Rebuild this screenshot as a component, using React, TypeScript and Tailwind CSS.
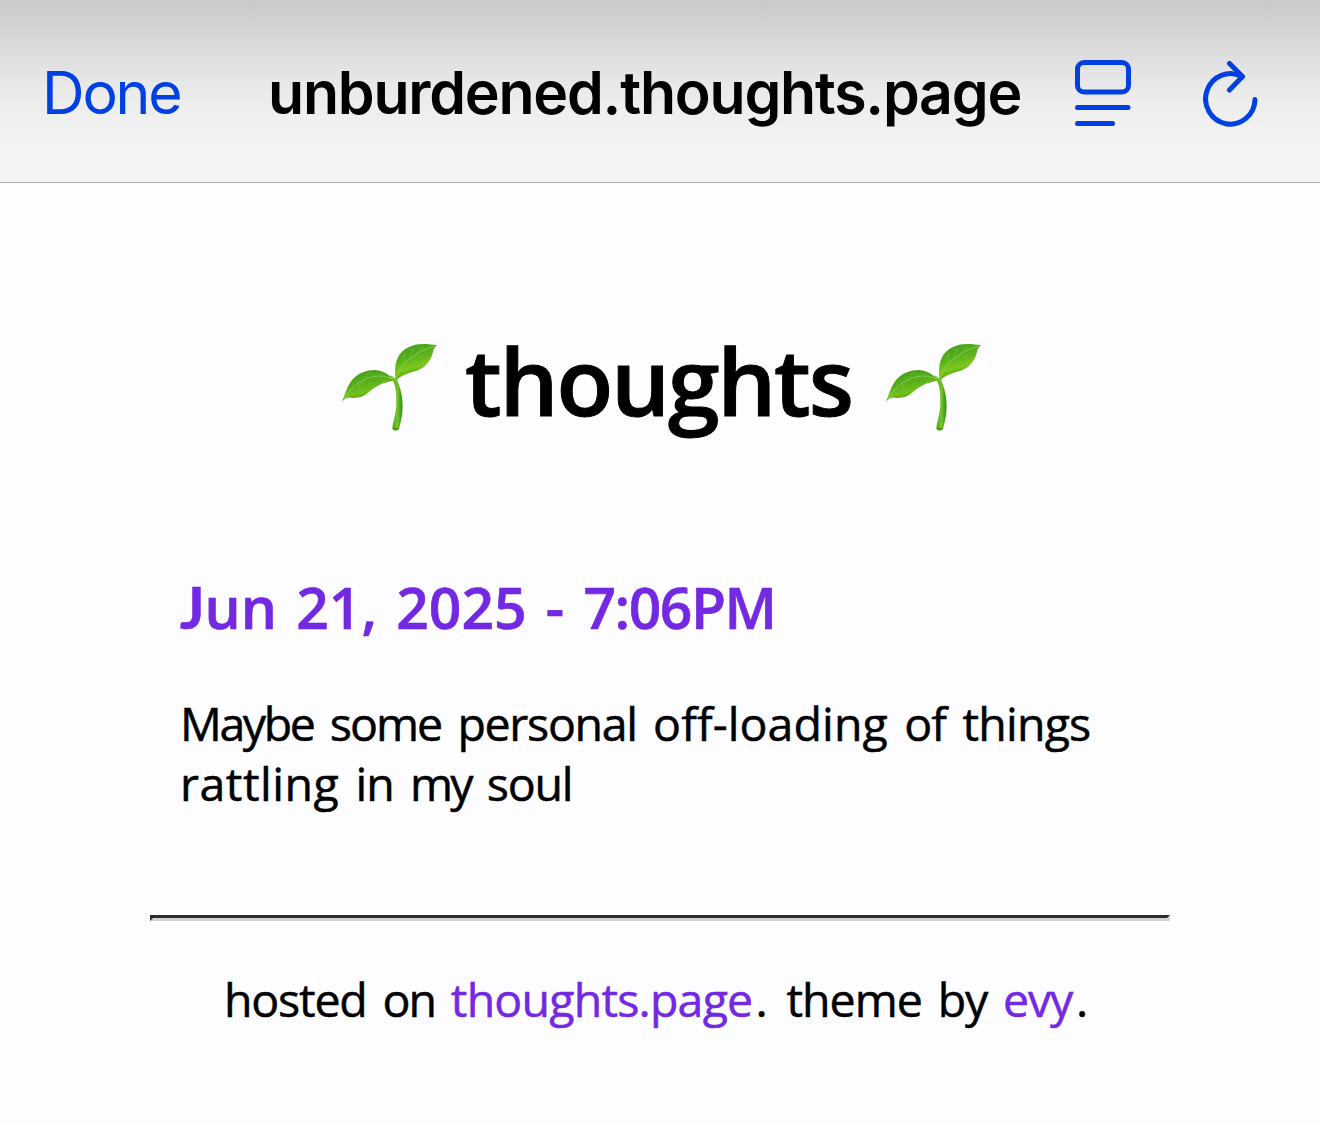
function Seedling({ id }: { id: string }) {
  const leaf = `${id}-leaf`;
  const leafDark = `${id}-leaf-dark`;
  const stem = `${id}-stem`;
  return (
    <svg viewBox="36 36 288 270" className="h-[90px] w-24 shrink-0" fill="none">
      <defs>
        <linearGradient id={leaf} x1="0" y1="0" x2="0.35" y2="1">
          <stop offset="0" stopColor="#3f9a1c" />
          <stop offset="0.45" stopColor="#58b01a" />
          <stop offset="0.7" stopColor="#7cc81a" />
          <stop offset="1" stopColor="#3c9a12" />
        </linearGradient>
        <linearGradient id={leafDark} x1="0" y1="0" x2="0.4" y2="1">
          <stop offset="0" stopColor="#3f981c" />
          <stop offset="0.5" stopColor="#58ae19" />
          <stop offset="0.75" stopColor="#74c01a" />
          <stop offset="1" stopColor="#2f8a12" />
        </linearGradient>
        <linearGradient id={stem} x1="188" y1="0" x2="218" y2="0" gradientUnits="userSpaceOnUse">
          <stop offset="0" stopColor="#4ba71c" />
          <stop offset="0.45" stopColor="#74c729" />
          <stop offset="1" stopColor="#2f8a12" />
        </linearGradient>
      </defs>
      <path
        d="M186 146C194 140 201 146 204 156C215 186 220 212 217 246C215 268 210 284 207 297C202 303 192 303 187 296C189 276 198 252 199 222C200 194 197 170 190 154Z"
        fill={`url(#${stem})`}
      />
      <path d="M189 292C194 295 202 295 206 292L205 298C201 302 192 302 189 297Z" fill="#3f9418" />
      <path
        d="M192 150C180 136 162 123 137 120C106 119 80 132 64 153C49 173 46 192 36 215C45 206 52 202 60 203C82 207 101 200 117 186C136 169 158 157 192 152Z"
        fill={`url(#${leafDark})`}
      />
      <path
        d="M197 149C193 120 195 92 210 72C226 52 251 42 280 42C296 42 309 44 322 46C313 50 310 60 308 69C302 93 288 110 264 121C239 130 213 134 200 151Z"
        fill={`url(#${leaf})`}
      />
      <path d="M188 147C158 133 126 136 97 152C71 166 55 186 42 208" stroke="#8fd05a" strokeWidth="2.5" />
      <path d="M137 138C130 131 119 130 109 132M118 143C108 139 100 140 91 145M109 147C101 159 91 166 83 178M134 140C122 153 118 161 110 171M92 157C88 166 85 172 84 179" stroke="#7ec443" strokeWidth="1.6" />
      <path d="M198 147C208 119 224 96 247 80C267 66 291 55 314 48" stroke="#8fd05a" strokeWidth="2.5" />
      <path d="M225 101C222 90 222 80 225 70M242 84C241 73 244 63 250 54M225 101C238 101 250 96 262 91M242 85C258 84 273 79 288 71M264 70C267 62 273 57 282 52" stroke="#7ec443" strokeWidth="1.6" />
      <path d="M185 139L189 147L199 151" stroke="#7bc52f" strokeWidth="5" strokeLinecap="round" />
    </svg>
  );
}

function ReaderIcon() {
  return (
    <svg viewBox="0 0 56 68" className="h-[68px] w-14" fill="none" stroke="currentColor" strokeWidth="5" strokeLinecap="round">
      <rect x="2.5" y="2.5" width="51" height="29.5" rx="6.5" />
      <path d="M2.5 47.5H53M2.5 63.5H37.5" />
    </svg>
  );
}

function ReloadIcon() {
  return (
    <svg viewBox="0 0 56 68" className="h-[68px] w-14" fill="none" stroke="currentColor" strokeWidth="5" strokeLinecap="round" strokeLinejoin="round">
      <path d="M52 39.5A24.7 25.2 0 1 1 39 16.7" />
      <path d="M26.5 3.5L39.5 16.5L26.5 30" />
    </svg>
  );
}

export default function App() {
  return (
    <div className="h-[1125px] w-[1320px] overflow-hidden bg-[#fdfdff] font-['Open_Sans',sans-serif] text-black">
      <header className="flex h-[183px] items-center border-b border-[#b2b2b4] bg-[linear-gradient(#c9c9c9_0px,#d2d2d3_24px,#dedee0_54px,#eaeaeb_90px,#f1f1f2_126px,#f5f5f6_182px)] pt-[3px] font-[Inter,sans-serif] leading-none whitespace-nowrap">
        <button className="ml-[42px] w-[226px] text-left text-[59px] leading-none tracking-[-2.2px] text-[#0040e0]">Done</button>
        <h1 className="w-[807px] text-[59px] font-semibold tracking-[-1.22px]">unburdened.thoughts.page</h1>
        <div className="flex gap-[72px] pt-[3px] text-[#0040e0]">
          <ReaderIcon />
          <ReloadIcon />
        </div>
      </header>

      <main className="whitespace-nowrap">
        <div className="flex pt-[137px] pl-[342px]">
          <div className="pt-[22px]">
            <Seedling id="left" />
          </div>
          <h2 className="w-[448px] pl-[27px] text-[93px] leading-[121px] font-semibold tracking-[-2.2px] [-webkit-text-stroke:1px]">thoughts</h2>
          <div className="pt-[22px]">
            <Seedling id="right" />
          </div>
        </div>

        <article className="mt-[131px] px-[180px]">
          <h3 className="text-[57px] leading-[70px] font-semibold text-[#7328e2] [word-spacing:4.5px] [-webkit-text-stroke:0.6px]">
            <span className="font-[Lato,sans-serif] font-bold">J</span>un 21, 2025 - <span className="tracking-[-1.5px]">7:06PM</span>
          </h3>
          <p className="mt-[51px] text-[46.5px] leading-[60px] tracking-[-0.8px] [word-spacing:5px] [-webkit-text-stroke:0.5px]">
            <span className="tracking-[-2.4px]">Maybe</span> <span className="tracking-[-2px]">some</span>{" "}
            <span className="tracking-[-1.3px]">personal</span> <span className="tracking-[0.1px]">off-loading</span> of things
            <br />
            <span className="tracking-[0.5px]">rattling</span> <span className="tracking-[-1px]">in</span>{" "}
            <span className="tracking-[-3px]">my</span> <span className="tracking-[-1.2px]">soul</span>
          </p>
        </article>

        <hr className="mx-[150px] mt-[102px] h-0 border-[3px] border-t-[#2c2c2c] border-r-[#d2d2d0] border-b-[#d2d2d0] border-l-[#2c2c2c]" />

        <footer className="mt-[48px] pl-[224px] text-[46.5px] leading-[60px] tracking-[-1.2px] [word-spacing:5px] [-webkit-text-stroke:0.5px]">
          hosted <span className="tracking-[-2px]">on</span> <a className="tracking-[-0.8px] text-[#7328e2]">thoughts.page</a>
          <span className="pl-[3px] tracking-[3px]">.</span> <span className="tracking-[-1px]">theme</span> by <a className="text-[#7328e2]">evy</a>
          <span className="pl-1">.</span>
        </footer>
      </main>
    </div>
  );
}
